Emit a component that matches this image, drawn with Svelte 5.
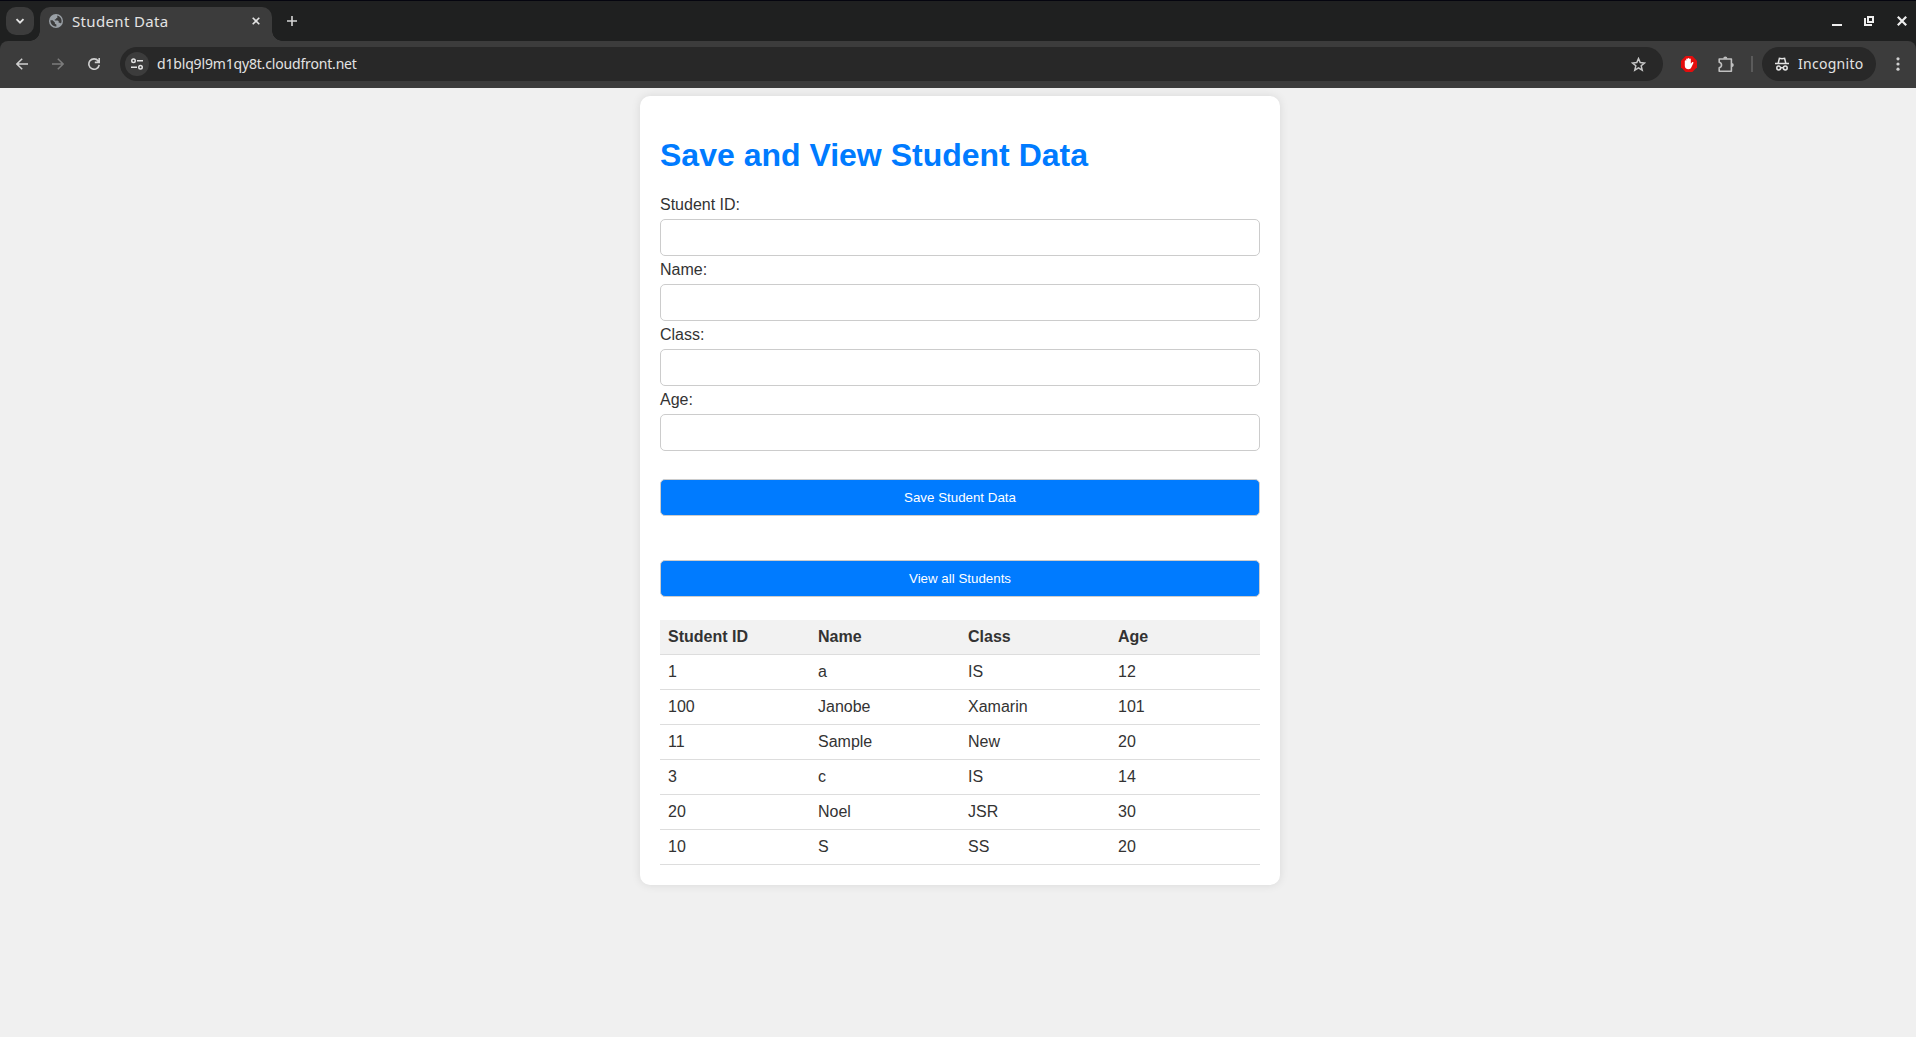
<script>
  const fields = ['Student ID:', 'Name:', 'Class:', 'Age:'];
  const columns = ['Student ID', 'Name', 'Class', 'Age'];
  const students = [
    ['1', 'a', 'IS', '12'],
    ['100', 'Janobe', 'Xamarin', '101'],
    ['11', 'Sample', 'New', '20'],
    ['3', 'c', 'IS', '14'],
    ['20', 'Noel', 'JSR', '30'],
    ['10', 'S', 'SS', '20']
  ];
</script>

<div class="window">
  <header class="chrome">
    <div class="tabstrip">
      <div class="search-tabs">
        <svg width="10" height="10" viewBox="0 0 10 10"><path d="M1.5 3.2 5 6.7l3.5-3.5" fill="none" stroke="#e3e3e3" stroke-width="1.9" /></svg>
      </div>
      <div class="tab">
        <svg width="14" height="14" viewBox="0 0 14 14">
          <circle cx="7" cy="7" r="7" fill="#9aa0a6" />
          <path d="M1.400 6.300h2.200l2.300 2.200v1.300l1.500.6v2.200C3.900 12.600 1.300 9.900 1.400 6.300ZM8.300 1.500c2.500.5 4.300 2.700 4.300 5.500 0 .9-.2 1.700-.6 2.400-.3-.5-.8-.7-1.400-.7H9.700V7.200L8.900 6.500H5.800V5.200h1.400V3.900h1.100Z" fill="#3c3c3c" />
        </svg>
        <span class="tab-title">Student Data</span>
        <svg width="8" height="8" viewBox="0 0 8 8"><path d="m.7.7 6.600 6.600M7.300.7.7 7.300" stroke="#e3e3e3" stroke-width="1.600" /></svg>
      </div>
      <svg class="new-tab" width="10" height="10" viewBox="0 0 10 10"><path d="M5 0v10M0 5h10" stroke="#d5d5d5" stroke-width="1.600" /></svg>
      <div class="controls">
        <svg width="10" height="10" viewBox="0 0 10 10"><path d="M0 9h10" stroke="#eee" stroke-width="2" /></svg>
        <svg width="10" height="10" viewBox="0 0 10 10" fill="none" stroke="#eee" stroke-width="2"><path d="M4 1h5v5H4Z" /><path d="M1 2v7h7" /></svg>
        <svg class="close" width="10" height="10" viewBox="0 0 10 10"><path d="m.8.8 8.400 8.400M9.200.8.8 9.200" stroke="#eee" stroke-width="2.200" /></svg>
      </div>
    </div>

    <div class="toolbar">
      <svg width="12" height="12" viewBox="0 0 12 12" fill="none" stroke="#d0d0d0" stroke-width="1.500"><path d="M12 6H1.200M6.200.7.9 6l5.300 5.300" /></svg>
      <svg class="forward" width="12" height="12" viewBox="0 0 12 12" fill="none" stroke="#7c7c7c" stroke-width="1.500"><path d="M0 6h10.800M5.800.7 11.100 6l-5.300 5.300" /></svg>
      <svg class="reload" width="12" height="12" viewBox="0 0 12 12" fill="none" stroke="#d0d0d0" stroke-width="1.600"><path d="M11.200 6.800A5.200 5.200 0 1 1 10.200 2.900L11.200 4.100M11.200 0v4.400H6.800" /></svg>
      <div class="omnibox">
        <div class="site-info">
          <svg width="12" height="12" viewBox="0 0 12 12" fill="none" stroke="#e3e3e3" stroke-width="1.500"><circle cx="2.500" cy="2.800" r="1.750" /><path d="M6 2.800h6M0 9.200h6" /><circle cx="9.500" cy="9.200" r="1.750" /></svg>
        </div>
        <span class="url">d1blq9l9m1qy8t.cloudfront.net</span>
        <svg class="star" width="15" height="15" viewBox="0 0 15 15"><path d="m7.500 1.600 1.700 4 4.300.4-3.300 2.800 1 4.300-3.700-2.300-3.700 2.300 1-4.300L1.500 6l4.300-.4Z" fill="none" stroke="#c7c7c7" stroke-width="1.500" /></svg>
      </div>
      <svg class="adblock" width="16" height="16" viewBox="0 0 16 16">
        <path d="M4.700 0h6.600L16 4.700v6.600L11.300 16H4.700L0 11.300V4.700Z" fill="#e40d0d" />
        <path d="M3.800 8V4.900c0-1 1.400-1 1.400 0V3.300c0-1 1.500-1 1.500 0V2.700c0-1 1.600-1 1.600 0v.6c0-1 1.500-1 1.500 0v4.500l1.100-1.300c.7-.9 1.900-.3 1.400.8l-1.900 4c-.6 1.300-1.400 2-2.800 2C5.100 13.300 3.800 12 3.800 9.800Z" fill="#fff" />
      </svg>
      <svg class="puzzle" width="17" height="17" viewBox="0 0 17 17">
        <path d="M1.200 3h12.200v12.200H1.200v-3.300c3.100-.7 3.100-4.900 0-5.600Z" fill="none" stroke="#c0c0c0" stroke-width="1.600" stroke-linejoin="round" />
        <path d="M5.200 2.800a2 2.100 0 0 1 4.200 0ZM13.600 7a2.100 2 0 0 1 0 4.200Z" fill="#c0c0c0" />
      </svg>
      <div class="divider"></div>
      <div class="incognito">
        <svg width="14" height="14" viewBox="0 0 14 14" fill="none" stroke="#e3e3e3" stroke-width="1.500"><path d="M0 6.500h14M3.200 6.200 4.400 1.300l2.600.5 2.600-.5 1.200 4.900" /><circle cx="3.700" cy="11" r="1.900" /><circle cx="10.300" cy="11" r="1.900" /><path d="M5.600 10.700h2.800" /></svg>
        <span>Incognito</span>
      </div>
      <svg class="menu" width="4" height="14" viewBox="0 0 4 14" fill="#d0d0d0"><circle cx="2" cy="1.800" r="1.600" /><circle cx="2" cy="7" r="1.600" /><circle cx="2" cy="12.200" r="1.600" /></svg>
    </div>
  </header>

  <main class="page">
    <div class="container">
      <h1>Save and View Student Data</h1>
      {#each fields as label, i}
        <label for={`field-${i}`}>{label}</label>
        <input id={`field-${i}`} type="text" />
      {/each}
      <button class="save">Save Student Data</button>
      <button class="view">View all Students</button>
      <table>
        <thead>
          <tr>{#each columns as column}<th>{column}</th>{/each}</tr>
        </thead>
        <tbody>
          {#each students as row}
            <tr>{#each row as cell}<td>{cell}</td>{/each}</tr>
          {/each}
        </tbody>
      </table>
    </div>
  </main>
</div>

<style>
  :global(body) { margin: 0; overflow: hidden; }
  .window { width: 1916px; height: 1037px; overflow: hidden; display: flex; flex-direction: column; background: #f0f0f0; font-family: "Liberation Sans", Arial, sans-serif; }
  svg { display: block; flex: none; }

  .chrome { flex: none; background: #1f2020; }
  .tabstrip { box-sizing: border-box; height: 41px; display: flex; align-items: flex-start; padding: 6px 0 0 6px; border-top: 1px solid #05050f; }
  .search-tabs { width: 28px; height: 28px; border-radius: 10px; background: #3c3c3c; display: grid; place-items: center; }
  .tab { position: relative; box-sizing: border-box; width: 232px; height: 34px; margin-left: 6px; padding: 0 12px 6px 9px; display: flex; align-items: center; background: #3c3c3c; border-radius: 10px 10px 0 0; }
  .tab::before, .tab::after { content: ""; position: absolute; bottom: 0; width: 10px; height: 10px; }
  .tab::before { left: -10px; background: radial-gradient(circle at 0 0, transparent 9.500px, #3c3c3c 10px); }
  .tab::after { right: -10px; background: radial-gradient(circle at 100% 0, transparent 9.500px, #3c3c3c 10px); }
  .tab-title { margin-left: 9px; font: 15px/20px "Noto Sans", sans-serif; letter-spacing: 0.35px; color: #e3e3e3; flex: 1; white-space: nowrap; }
  .new-tab { margin: 9px 0 0 15px; }
  .controls { margin: 9px 9px 0 auto; display: flex; gap: 22px; }
  .close { margin-left: 1px; }

  .toolbar { box-sizing: border-box; height: 47px; display: flex; align-items: center; padding: 0 16px 1px; background: #3c3c3c; border-radius: 8px 8px 0 0; }
  .forward, .reload { margin-left: 24px; }
  .omnibox { width: 1543px; height: 34px; margin-left: 20px; border-radius: 17px; background: #282828; display: flex; align-items: center; }
  .site-info { width: 24px; height: 24px; margin-left: 5px; border-radius: 50%; background: #3c3c3c; display: grid; place-items: center; }
  .url { margin-left: 8px; font: 14px/20px "Noto Sans", sans-serif; letter-spacing: -0.17px; color: #e3e3e3; white-space: nowrap; }
  .star { margin: 0 17px 0 auto; }
  .adblock { margin-left: 18px; }
  .puzzle { margin-left: 21px; }
  .divider { width: 2px; height: 16px; margin-left: 16px; background: #5b5b5b; }
  .incognito { width: 114px; height: 34px; margin-left: 9px; border-radius: 17px; background: #282828; display: flex; align-items: center; font: 14px/20px "Noto Sans", sans-serif; letter-spacing: 0.28px; color: #e3e3e3; }
  .incognito svg { margin: 0 9px 0 13px; }
  .menu { margin-left: 20px; }

  .page { flex: 1; padding: 8px 0 0 640px; overflow: hidden; }
  .container { box-sizing: border-box; width: 640px; height: 789px; padding: 20px; background: #fff; border-radius: 10px; box-shadow: 0 0 10px rgba(0, 0, 0, 0.1); color: #333; font-size: 16px; }
  h1 { margin: 21px 0 22px; font-size: 32px; line-height: 37px; color: #007bff; }
  label { display: block; line-height: 18px; }
  input, button { box-sizing: border-box; display: block; width: 100%; height: 37px; border: 1px solid #ccc; border-radius: 5px; }
  input { margin: 5px 0; padding: 10px; }
  button { padding: 10px; background: #007bff; color: #fff; font: 13.3333px "Liberation Sans", Arial, sans-serif; }
  .save { margin-top: 28px; }
  .view { margin-top: 44px; }
  table { width: 100%; margin-top: 23px; border-collapse: collapse; table-layout: fixed; }
  th, td { height: 18px; padding: 8px; border-bottom: 1px solid #ddd; text-align: left; line-height: 18px; }
  th { background: #f2f2f2; }
</style>
